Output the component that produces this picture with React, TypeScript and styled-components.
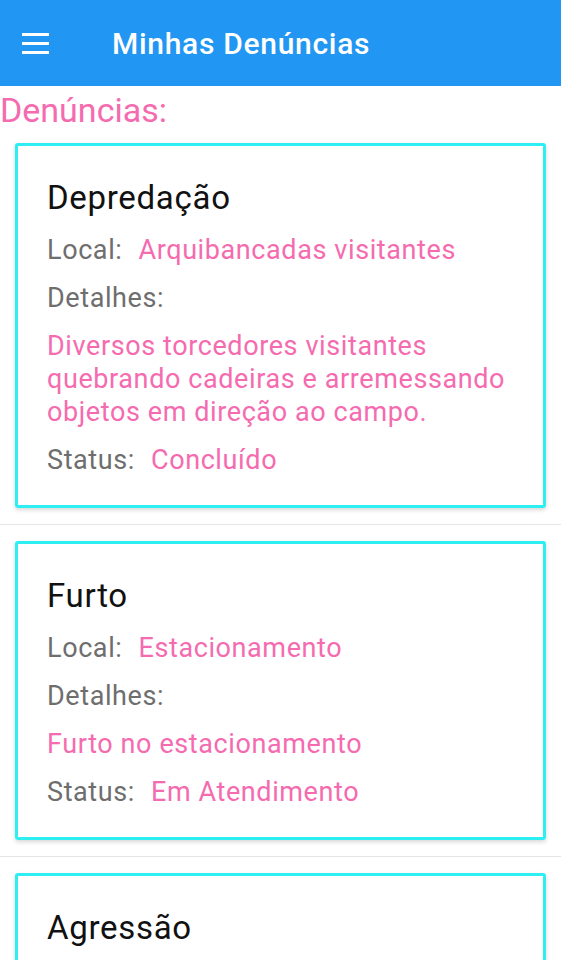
import React from 'react';
import styled, { createGlobalStyle } from 'styled-components';

const GlobalStyle = createGlobalStyle`
  html, body {
    margin: 0;
    padding: 0;
    background: #ffffff;
    font-family: Roboto, "Noto Sans", "Liberation Sans", sans-serif;
  }
`;

const Screen = styled.div`
  width: 561px;
  height: 960px;
  overflow: hidden;
  background: #ffffff;
`;

const AppBar = styled.header`
  height: 86px;
  background: #2196f3;
  display: flex;
  align-items: center;
  padding: 0 22px;
  box-sizing: border-box;
`;

const MenuButton = styled.div`
  width: 27px;
  display: flex;
  flex-direction: column;
  gap: 6px;
  margin-right: 63px;
`;

const MenuBar = styled.span`
  display: block;
  height: 3px;
  background: #ffffff;
`;

const AppTitle = styled.h1`
  margin: 0;
  color: #ffffff;
  font-size: 30px;
  font-weight: 500;
  letter-spacing: 0.7px;
`;

const SectionTitle = styled.h2`
  margin: 0;
  padding-top: 5px;
  color: #f56bb0;
  font-size: 34px;
  font-weight: 400;
  line-height: 38px;
`;

const List = styled.ul`
  list-style: none;
  margin: 0;
  padding: 0;
`;

const ListItem = styled.li`
  padding: 16px 15px;
  border-bottom: 1px solid #e6e6e6;

  &:first-child {
    padding-top: 14px;
  }
`;

const Card = styled.article`
  border: 3px solid #2deff2;
  border-radius: 3px;
  box-shadow: 0 2px 4px rgba(0, 0, 0, 0.16);
  padding: 34px 29px 28px;
  display: flex;
  flex-direction: column;
  gap: 15px;
`;

const CardTitle = styled.h3`
  margin: 0 0 3px;
  color: #111111;
  font-size: 33px;
  font-weight: 400;
  line-height: 36px;
  letter-spacing: 0.7px;
`;

const Row = styled.div`
  display: flex;
  gap: 16px;
  font-size: 27px;
  line-height: 33px;
  letter-spacing: 0.6px;
`;

const Label = styled.span`
  color: #6e6e6e;
`;

const Value = styled.span`
  color: #f56bb0;
`;

const Details = styled.p`
  margin: 0;
  color: #f56bb0;
  font-size: 27px;
  line-height: 33px;
  letter-spacing: 0.6px;
`;

type Report = {
  title: string;
  local: string;
  details: string;
  status: string;
};

const reports: Report[] = [
  {
    title: 'Depredação',
    local: 'Arquibancadas visitantes',
    details: 'Diversos torcedores visitantes quebrando cadeiras e arremessando objetos em direção ao campo.',
    status: 'Concluído',
  },
  {
    title: 'Furto',
    local: 'Estacionamento',
    details: 'Furto no estacionamento',
    status: 'Em Atendimento',
  },
  {
    title: 'Agressão',
    local: 'Setor norte',
    details: 'Briga entre torcedores',
    status: 'Pendente',
  },
];

const App: React.FC = () => {
  return (
    <Screen>
      <GlobalStyle />
      <AppBar>
        <MenuButton aria-label="Menu">
          <MenuBar />
          <MenuBar />
          <MenuBar />
        </MenuButton>
        <AppTitle>Minhas Denúncias</AppTitle>
      </AppBar>

      <SectionTitle>Denúncias:</SectionTitle>

      <List>
        {reports.map((report) => (
          <ListItem key={report.title}>
            <Card>
              <CardTitle>{report.title}</CardTitle>
              <Row>
                <Label>Local:</Label>
                <Value>{report.local}</Value>
              </Row>
              <Row>
                <Label>Detalhes:</Label>
              </Row>
              <Details>{report.details}</Details>
              <Row>
                <Label>Status:</Label>
                <Value>{report.status}</Value>
              </Row>
            </Card>
          </ListItem>
        ))}
      </List>
    </Screen>
  );
};

export default App;
